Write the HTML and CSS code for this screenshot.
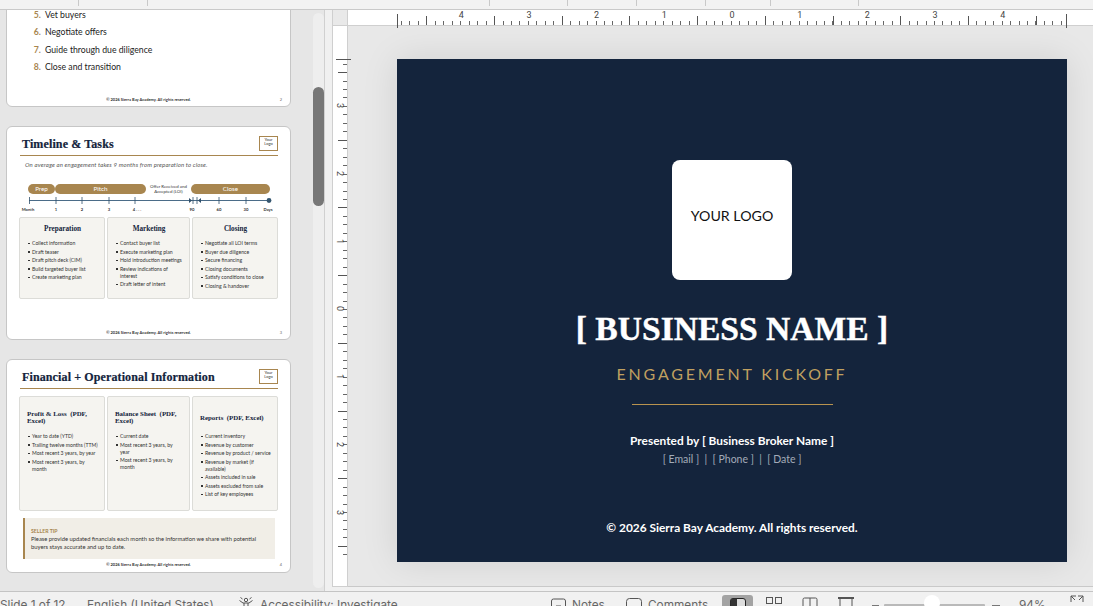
FILE: index.html
```html
<!DOCTYPE html>
<html>
<head>
<title>Engagement Kickoff</title>
<link rel="stylesheet" href="styles.css">
</head>
<body>

<div class="topbar">
    <div class="tab tab-a"></div>
    <div class="tab tab-b"></div>
    <div class="tab tab-c"></div>
    <div class="tab tab-d"></div>
    <div class="tab tab-e"></div>
    <div class="tab tab-f"></div>
    <div class="tab tab-g"></div>
    <div class="tab tab-h"></div>
</div>

<div class="workspace">
    <div class="thumbs">
        <!-- slide 2, scrolled most of the way out -->
        <div class="slide slide-first">
            <ol class="steps" start="5">
                <li>Vet buyers</li>
                <li>Negotiate offers</li>
                <li>Guide through due diligence</li>
                <li>Close and transition</li>
            </ol>
            <div class="slide-foot"><span></span><span>© 2026 Sierra Bay Academy. All rights reserved.</span><span class="page-num">2</span></div>
        </div>

        <div class="slide">
            <div class="slide-head">
                <div class="slide-title">Timeline &amp; Tasks</div>
                <div class="mini-logo">Your<br>Logo</div>
            </div>
            <div class="slide-sub">On average an engagement takes 9 months from preparation to close.</div>
            <div class="pills">
                <div class="pill pill-prep">Prep</div>
                <div class="pill pill-pitch">Pitch</div>
                <div class="pill-note">Offer Received and<br>Accepted (LOI)</div>
                <div class="pill pill-close">Close</div>
            </div>
            <svg class="timeline" width="284" height="24" viewBox="0 0 284 24">
                <line x1="22" y1="6.5" x2="262" y2="6.5" stroke="#4b6c88" stroke-width="1"/>
                <g stroke="#2f4f6b" stroke-width="0.8">
                    <line x1="22.5" y1="3" x2="22.5" y2="10"/>
                    <line x1="49" y1="3" x2="49" y2="10"/>
                    <line x1="75" y1="3" x2="75" y2="10"/>
                    <line x1="102" y1="3" x2="102" y2="10"/>
                    <line x1="128" y1="3" x2="128" y2="10"/>
                    <line x1="186" y1="3" x2="186" y2="10"/>
                    <line x1="190" y1="3" x2="190" y2="10"/>
                    <line x1="212" y1="3" x2="212" y2="10"/>
                    <line x1="239" y1="3" x2="239" y2="10"/>
                </g>
                <path d="M182 4l3 2.5-3 2.5zM194 4l-3 2.5 3 2.5z" fill="#2f4f6b"/>
                <circle cx="262" cy="6.5" r="2.4" fill="#35566f"/>
                <g class="timeline-text" text-anchor="middle">
                    <text x="21" y="16.5">Month</text>
                    <text x="49" y="16.5">1</text>
                    <text x="75" y="16.5">2</text>
                    <text x="102" y="16.5">3</text>
                    <text x="130" y="16.5">4 . . .</text>
                    <text x="185" y="16.5">90</text>
                    <text x="212" y="16.5">60</text>
                    <text x="239" y="16.5">30</text>
                    <text x="261" y="16.5">Days</text>
                </g>
            </svg>
            <div class="cards cards-short">
                <div class="card">
                    <div class="card-title centered">Preparation</div>
                    <ul>
                        <li>Collect information</li>
                        <li>Draft teaser</li>
                        <li>Draft pitch deck (CIM)</li>
                        <li>Build targeted buyer list</li>
                        <li>Create marketing plan</li>
                    </ul>
                </div>
                <div class="card">
                    <div class="card-title centered">Marketing</div>
                    <ul>
                        <li>Contact buyer list</li>
                        <li>Execute marketing plan</li>
                        <li>Hold introduction meetings</li>
                        <li>Review indications of interest</li>
                        <li>Draft letter of intent</li>
                    </ul>
                </div>
                <div class="card">
                    <div class="card-title centered">Closing</div>
                    <ul>
                        <li>Negotiate all LOI terms</li>
                        <li>Buyer due diligence</li>
                        <li>Secure financing</li>
                        <li>Closing documents</li>
                        <li>Satisfy conditions to close</li>
                        <li>Closing &amp; handover</li>
                    </ul>
                </div>
            </div>
            <div class="slide-foot"><span></span><span>© 2026 Sierra Bay Academy. All rights reserved.</span><span class="page-num">3</span></div>
        </div>

        <div class="slide">
            <div class="slide-head">
                <div class="slide-title">Financial + Operational Information</div>
                <div class="mini-logo">Your<br>Logo</div>
            </div>
            <div class="cards cards-tall">
                <div class="card">
                    <div class="card-title two-line">Profit &amp; Loss&nbsp; (PDF, Excel)</div>
                    <ul>
                        <li>Year to date (YTD)</li>
                        <li>Trailing twelve months (TTM)</li>
                        <li>Most recent 3 years, by year</li>
                        <li>Most recent 3 years, by month</li>
                    </ul>
                </div>
                <div class="card">
                    <div class="card-title two-line">Balance Sheet&nbsp; (PDF, Excel)</div>
                    <ul>
                        <li>Current date</li>
                        <li>Most recent 3 years, by year</li>
                        <li>Most recent 3 years, by month</li>
                    </ul>
                </div>
                <div class="card">
                    <div class="card-title two-line one-line">Reports&nbsp; (PDF, Excel)</div>
                    <ul>
                        <li>Current inventory</li>
                        <li>Revenue by customer</li>
                        <li>Revenue by product / service</li>
                        <li>Revenue by market (if available)</li>
                        <li>Assets included in sale</li>
                        <li>Assets excluded from sale</li>
                        <li>List of key employees</li>
                    </ul>
                </div>
            </div>
            <div class="tip">
                <div class="tip-label">SELLER TIP</div>
                <div class="tip-text">Please provide updated financials each month so the information we share with potential buyers stays accurate and up to date.</div>
            </div>
            <div class="slide-foot foot-tight"><span></span><span>© 2026 Sierra Bay Academy. All rights reserved.</span><span class="page-num">4</span></div>
        </div>
    </div>

    <div class="scroll-track"><div class="scroll-thumb"></div></div>

    <div class="editor">
        <div class="ruler-top">
            <div class="ruler-corner"></div>
            <div class="ruler-h">
                <div class="ticks-h">
                    <span>4</span><span>3</span><span>2</span><span>1</span><span>0</span><span>1</span><span>2</span><span>3</span><span>4</span>
                </div>
            </div>
        </div>
        <div class="editor-body">
            <div class="ruler-v">
                <div class="ticks-v">
                    <span>3</span><span>2</span><span>1</span><span>0</span><span>1</span><span>2</span><span>3</span>
                </div>
            </div>
            <div class="canvas">
                <div class="cover">
                    <div class="cover-logo">YOUR LOGO</div>
                    <div class="cover-name">[ BUSINESS NAME ]</div>
                    <div class="cover-kicker">ENGAGEMENT KICKOFF</div>
                    <div class="cover-rule"></div>
                    <div class="cover-by">Presented by [ Business Broker Name ]</div>
                    <div class="cover-contact">[ Email ] &nbsp;|&nbsp; [ Phone ] &nbsp;|&nbsp; [ Date ]</div>
                    <div class="cover-copy">© 2026 Sierra Bay Academy. All rights reserved.</div>
                </div>
            </div>
        </div>
        <div class="editor-gap"></div>
    </div>
</div>

<div class="statusbar">
    <span class="st-slide">Slide 1 of 12</span>
    <span class="st-lang">English (United States)</span>
    <svg class="st-access" width="16" height="14" viewBox="0 0 16 14" fill="none" stroke="#555" stroke-width="1">
        <circle cx="8" cy="3" r="1.7"/>
        <path d="M1.5 3.5L5 6h6l3.5-2.5M6 6v3l-2 4M10 6v3l2 4M2.5 0.5l2 1.5M13.5 0.5l-2 1.5"/>
    </svg>
    <span class="st-a11y">Accessibility: Investigate</span>
    <svg class="st-notes" width="15" height="14" viewBox="0 0 15 14" fill="none" stroke="#555" stroke-width="1">
        <path d="M2.5 1h10a2 2 0 0 1 2 2v9a2 2 0 0 1-2 2h-10a2 2 0 0 1-2-2v-9a2 2 0 0 1 2-2zM5 8h5"/>
    </svg>
    <span class="st-label st-notes-label">Notes</span>
    <svg class="st-comments" width="16" height="14" viewBox="0 0 16 14" fill="none" stroke="#555" stroke-width="1">
        <rect x="0.5" y="0.5" width="15" height="13" rx="3"/>
    </svg>
    <span class="st-label st-comments-label">Comments</span>
    <div class="st-view">
        <svg width="16" height="12" viewBox="0 0 16 12">
            <rect x="0.5" y="0.5" width="15" height="14" rx="2.5" fill="#ddd" stroke="#222"/>
            <path d="M3 0.5h4v14h-4a2.5 2.5 0 0 1-2.500-2.500v-9a2.500 2.500 0 0 1 2.500-2.500z" fill="#333"/>
        </svg>
    </div>
    <svg class="st-grid" width="16" height="8" viewBox="0 0 16 8" fill="none" stroke="#555" stroke-width="1">
        <rect x="0.5" y="0.500" width="6" height="6"/>
        <rect x="9.500" y="0.500" width="6" height="6"/>
    </svg>
    <svg class="st-read" width="16" height="13" viewBox="0 0 16 13" fill="none" stroke="#555" stroke-width="1">
        <path d="M1 13V2.500Q1 1 2.500 1H8V13M8 1h5.500Q15 1 15 2.500V13"/>
    </svg>
    <svg class="st-show" width="16" height="13" viewBox="0 0 16 13" fill="none" stroke="#555" stroke-width="1">
        <path d="M0 1h16" stroke-width="2"/><path d="M2 1v12M14 1v12"/>
    </svg>
    <span class="st-minus"></span>
    <div class="st-slider"><div class="st-knob"></div></div>
    <span class="st-plus"></span>
    <span class="st-zoom">94%</span>
    <svg class="st-fit" width="14" height="8" viewBox="0 0 14 8" fill="none" stroke="#555" stroke-width="1">
        <path d="M1 7V1h5M1 1l4 4M13 7V1H8M13 1L9 5"/>
    </svg>
</div>

</body>
</html>
```

FILE: styles.css
```css
html, body {
    margin: 0;
    height: 606px;
    overflow: hidden;
}
body {
    display: flex;
    flex-direction: column;
    background: #e6e6e6;
    font-family: "Lato", "Liberation Sans", sans-serif;
    color: #222;
}

/* top bar, only the last pixels are on screen */
.topbar {
    display: flex;
    flex: none;
    height: 9px;
    background: #f2f2f2;
    border-bottom: 1px solid #c9c9c9;
}
.tab { border-right: 1px solid #c9c9c9; height: 6px; flex: none; }
.tab-a { width: 78px; }
.tab-b { width: 68px; }
.tab-c { width: 341px; }
.tab-d { width: 77px; }
.tab-e { width: 68px; }
.tab-f { width: 68px; }
.tab-g { width: 64px; }
.tab-h { width: 87px; }

.workspace {
    display: flex;
    flex: none;
    height: 581px;
    border-bottom: 1px solid #c4c4c4;
    overflow: hidden;
}

/* thumbnail column */
.thumbs {
    flex: none;
    width: 313px;
    padding-left: 6px;
    box-sizing: border-box;
}
.slide {
    display: flex;
    flex-direction: column;
    box-sizing: border-box;
    width: 285px;
    height: 214px;
    margin-bottom: 19px;
    background: #fff;
    border: 1px solid #c6c6c6;
    border-radius: 6px;
}
.slide-first { margin-top: -117px; }
.steps {
    margin: 112px 0 0;
    padding-left: 38px;
    font-size: 8.7px;
    line-height: 17.3px;
    color: #222;
}
.steps li::marker {
    content: counter(list-item) ".  ";
    color: #a8864f;
    font-weight: 700;
}
.slide-foot {
    display: grid;
    grid-template-columns: 1fr auto 1fr;
    margin-top: auto;
    padding: 0 8px 4px;
    font-size: 4px;
    line-height: 5px;
    font-weight: 700;
    color: #333;
}
.foot-tight { padding-bottom: 5px; }
.page-num { justify-self: end; font-weight: 400; color: #666; }

.slide-head {
    display: flex;
    justify-content: space-between;
    align-items: center;
    height: 19px;
    margin: 8px 12px 0 13px;
    padding: 0 0 1px 2px;
    border-bottom: 1px solid #a8864f;
}
.slide-title {
    font-family: "Liberation Serif", serif;
    font-weight: 700;
    font-size: 12px;
    letter-spacing: 0.12px;
    -webkit-text-stroke: 0.2px #14243c;
    color: #14243c;
}
.mini-logo {
    box-sizing: border-box;
    width: 19px;
    height: 15px;
    margin-top: -3px;
    border: 1px solid #a8864f;
    font-size: 4px;
    line-height: 4.8px;
    text-align: center;
    padding-top: 1px;
    color: #333;
    background: #fff;
}
.slide-sub {
    margin: 5px 0 0 18px;
    font-size: 6px;
    line-height: 7px;
    font-style: italic;
    letter-spacing: 0.15px;
    color: #555;
}

.pills {
    display: flex;
    align-items: center;
    height: 10px;
    margin: 16px 0 0 21px;
}
.pill {
    height: 10px;
    line-height: 10px;
    border-radius: 5px;
    background: #a8864f;
    color: #fff;
    font-size: 6.3px;
    text-align: center;
    flex: none;
}
.pill-prep { width: 27px; }
.pill-pitch { width: 91px; }
.pill-note {
    flex: none;
    width: 45px;
    font-size: 4.4px;
    line-height: 5px;
    text-align: center;
    color: #333;
}
.pill-close { width: 79px; }
.timeline { display: block; flex: none; }
.timeline-text { font-size: 4.2px; font-weight: 700; fill: #333; }

.cards {
    display: grid;
    grid-template-columns: 86px 83px 86px;
    gap: 2px;
    margin: 0 12px;
}
.cards-short { height: 82px; margin-top: -1px; }
.cards-tall { height: 115px; margin-top: 7px; }
.card {
    box-sizing: border-box;
    background: #f5f4f0;
    border: 1px solid #dcdcd8;
    border-radius: 2px;
    padding: 8px 6px 0 7px;
    font-size: 5.15px;
    color: #333;
}
.cards-tall .card { padding-top: 13px; }
.card-title {
    font-family: "Liberation Serif", serif;
    font-weight: 700;
    font-size: 7.2px;
    line-height: 7px;
    color: #14243c;
}
.card-title.centered { text-align: center; }
.card-title.two-line { height: 14px; font-size: 6.9px; }
.card-title.one-line { padding-top: 3.5px; height: 10.5px; white-space: nowrap; }
.card ul { margin: 7px 0 0; padding: 0 0 0 4px; list-style: none; }
.card li {
    position: relative;
    line-height: 7px;
    margin-bottom: 1.5px;
    padding-left: 1px;
}
.card li::before {
    content: "";
    position: absolute;
    left: -3px;
    top: 2.5px;
    width: 1.5px;
    height: 1.5px;
    background: #333;
}
.cards-tall .card ul { margin-top: 9px; }

.tip {
    box-sizing: border-box;
    height: 41px;
    margin: 7px 15px 0 16px;
    padding: 10px 6px 0 6px;
    background: #f1eee7;
    border-left: 2px solid #a8864f;
}
.tip-label { font-size: 5.2px; line-height: 6px; font-weight: 700; color: #a8864f; }
.tip-text { margin-top: 1px; font-size: 5.8px; line-height: 8px; color: #333; }

/* scrollbar */
.scroll-track {
    flex: none;
    width: 11px;
    height: 575px;
    margin-top: 3px;
    background: #eeeeee;
    border-radius: 6px;
}
.scroll-thumb {
    width: 11px;
    height: 119px;
    margin-top: 74px;
    background: #777;
    border-radius: 6px;
}

/* editor with rulers */
.editor {
    display: flex;
    flex-direction: column;
    flex: none;
    width: 769px;
    border-left: 1px solid #d0d0d0;
    background: #f0f0f0;
    padding-left: 7px;
    box-sizing: border-box;
}
.ruler-top {
    display: flex;
    flex: none;
    height: 16px;
    position: relative;
    z-index: 2;
}
.ruler-corner {
    flex: none;
    width: 16px;
    box-sizing: border-box;
    background: #e9e9e9;
    border-left: 1px solid #cfcfcf;
    border-right: 1px solid #cfcfcf;
    border-bottom: 1px solid #cfcfcf;
}
.ruler-h {
    flex: 1;
    background: #fff;
    border-bottom: 1px solid #cfcfcf;
    padding-left: 49px;
    height: 15px;
}
.ticks-h {
    display: flex;
    justify-content: center;
    box-sizing: border-box;
    width: 670px;
    height: 19px;
    background-repeat: no-repeat;
    background-image:
        linear-gradient(#555, #555),
        linear-gradient(#555, #555),
        repeating-linear-gradient(to right, #555 29.35px, #555 30.35px, transparent 30.35px, transparent 97.05px),
        repeating-linear-gradient(to right, #666 4px, #666 5px, transparent 5px, transparent 12.46px);
    background-size: 1px 14px, 1px 14px, 100% 9px, 100% 4px;
    background-position: 0 4px, 100% 4px, 0 6px, 0 11px;
}
.ticks-h span {
    flex: none;
    width: 67.7px;
    text-align: center;
    font-family: "Roboto", sans-serif;
    font-size: 9px;
    line-height: 10px;
    color: #444;
}
.editor-body {
    display: flex;
    flex: none;
    height: 561px;
}
.ruler-v {
    flex: none;
    box-sizing: border-box;
    width: 16px;
    background: #fff;
    border-left: 1px solid #cfcfcf;
    border-right: 1px solid #cfcfcf;
    border-bottom: 1px solid #cfcfcf;
    padding-top: 33px;
    position: relative;
    z-index: 2;
}
.ticks-v {
    display: flex;
    flex-direction: column;
    justify-content: center;
    box-sizing: border-box;
    width: 18px;
    margin-left: 3px;
    height: 504px;
    padding-bottom: 4px;
    background-repeat: no-repeat;
    background-image:
        linear-gradient(#555, #555),
        repeating-linear-gradient(to bottom, #555 13.05px, #555 14.05px, transparent 14.05px, transparent 80.75px),
        repeating-linear-gradient(to bottom, #666 4.66px, #666 5.66px, transparent 5.66px, transparent 13.12px);
    background-size: 15px 1px, 9px 100%, 4px 100%;
    background-position: 0 0, 2px 0, 7px 0;
}
.ticks-v span {
    flex: none;
    height: 67.7px;
    width: 8px;
    writing-mode: vertical-rl;
    text-align: center;
    font-family: "Roboto", sans-serif;
    font-size: 9px;
    line-height: 8px;
    color: #444;
}
.canvas {
    flex: 1;
    background: #e8e8e8;
    border-bottom: 1px solid #c9c9c9;
    padding: 33px 0 0 49px;
    overflow: hidden;
}
.editor-gap { flex: none; height: 4px; }

/* big slide */
.cover {
    display: flex;
    flex-direction: column;
    align-items: center;
    width: 670px;
    height: 503px;
    background: #14243c;
    box-shadow: 0 0 34px rgba(0, 0, 0, 0.10);
}
.cover-logo {
    display: flex;
    align-items: center;
    justify-content: center;
    box-sizing: border-box;
    width: 120px;
    height: 120px;
    margin-top: 101px;
    padding-bottom: 10px;
    background: #fff;
    border-radius: 8px;
    font-size: 14.2px;
    color: #111;
}
.cover-name {
    margin-top: 28px;
    font-family: "Liberation Serif", serif;
    font-weight: 700;
    font-size: 33.6px;
    line-height: 42px;
    -webkit-text-stroke: 0.4px #fff;
    color: #fff;
    white-space: nowrap;
}
.cover-kicker {
    margin-top: 14px;
    font-size: 16px;
    line-height: 20px;
    letter-spacing: 2.8px;
    color: #c0a060;
}
.cover-rule {
    width: 201px;
    height: 1px;
    margin-top: 20px;
    background: #b8934f;
}
.cover-by {
    margin-top: 28px;
    font-size: 11.9px;
    line-height: 16px;
    font-weight: 700;
    color: #fff;
}
.cover-contact {
    margin-top: 3px;
    font-size: 10.5px;
    line-height: 14px;
    color: #a3abb8;
}
.cover-copy {
    margin-top: 54px;
    font-size: 11.9px;
    line-height: 16px;
    font-weight: 700;
    color: #fff;
}

/* status bar, cut by the bottom of the window */
.statusbar {
    display: flex;
    flex: none;
    align-items: flex-start;
    height: 15px;
    background: #f1f1f1;
    font-family: "Inter", "Roboto", sans-serif;
    font-size: 11.8px;
    line-height: 14px;
    color: #666;
    white-space: nowrap;
}
.statusbar > * { flex: none; }
.statusbar span { margin-top: 6px; }
.st-slide { width: 87px; }
.st-lang { width: 151px; }
.st-access { margin-top: 5px; width: 16px; }
.st-a11y { width: 140px; margin-left: 6px; }
.st-notes { margin: 6px 0 0 151px; }
.st-notes-label { width: 54px; margin-left: 6px; }
.st-comments { margin-top: 6px; }
.st-comments-label { width: 74px; margin-left: 6px; }
.st-view {
    width: 31px;
    height: 15px;
    margin-top: 3px;
    background: #a3a3a3;
    border-radius: 3px;
    padding-top: 3px;
    box-sizing: border-box;
    overflow: hidden;
}
.st-view svg { display: block; margin: 0 auto; }
.st-grid { margin: 5px 0 0 13px; }
.st-read { margin: 5px 0 0 20px; }
.st-show { margin: 5px 0 0 20px; }
.statusbar .st-minus {
    width: 7px;
    height: 2px;
    margin: 13px 0 0 18px;
    background: #777;
}
.st-slider {
    position: relative;
    width: 101px;
    height: 6px;
    margin: 12px 0 0 5px;
    background: #b9b9b9;
    border-radius: 1px;
}
.st-knob {
    position: absolute;
    left: 40px;
    top: -9px;
    width: 16px;
    height: 16px;
    background: #fff;
    border-radius: 50%;
}
.statusbar .st-plus {
    width: 8px;
    height: 2px;
    margin: 13px 0 0 7px;
    background: #777;
}
.st-zoom { width: 51px; margin-left: 19px; }
.st-fit { margin-top: 3px; }
```
